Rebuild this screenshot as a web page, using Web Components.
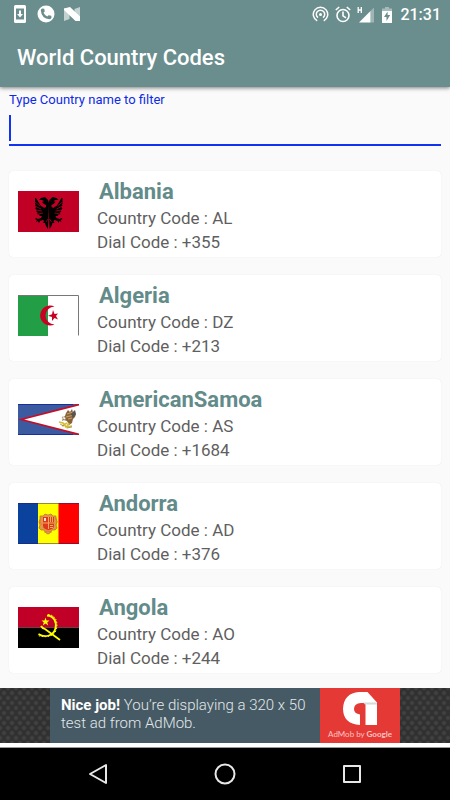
<!DOCTYPE html>
<html lang="en">
<head>
<meta charset="utf-8">
<meta name="viewport" content="width=device-width, initial-scale=1">
<title>World Country Codes</title>
<style>
  html, body {
    height: 100%;
    margin: 0;
  }
  body {
    font-family: Roboto, "Noto Sans", sans-serif;
    background: #fafafa;
  }
</style>
</head>
<body>
<country-app></country-app>

<script>
const countries = [
  { name: 'Albania', code: 'AL', dial: '+355' },
  { name: 'Algeria', code: 'DZ', dial: '+213' },
  { name: 'AmericanSamoa', code: 'AS', dial: '+1684' },
  { name: 'Andorra', code: 'AD', dial: '+376' },
  { name: 'Angola', code: 'AO', dial: '+244' }
];

// Flag drawings, all 61 units wide
const flags = {
  AL: `<svg viewBox="0 0 61 41">
    <path fill="#c00024" d="M0 0h61v41H0z"/>
    <g id="half">
      <path d="M31 12l-1-3-3-3-4 1-2 2 3 0 2 1-2 1 2 2 2 1v2l-2 1-1-1-2-1-2-3-3-5-1 0 0 3 0 3 1 1-1 0 1 3-1 0 2 3-1 0 2 2-1 1 3 1-1 1 3 0-1 2-3 1-2-1-1 1 2 1-1 2 2-1 1 2 1-2 3-1 1 1-1 2 2 0 1 3 2 3z"/>
      <path fill="none" stroke="#c00024" stroke-width=".7" d="M17 11l5 4M17 15l6 3M18 19l6 1M20 23l5-1M28 31l2-3"/>
    </g>
    <use href="#half" transform="translate(61.5 0) scale(-1 1)"/>
  </svg>`,
  DZ: `<svg viewBox="0 0 61 41">
    <path fill="#fff" d="M0 0h61v41H0z"/>
    <path fill="#229e46" d="M0 0h30v41H0z"/>
    <path fill="none" stroke="#777" d="M0 .5h60.500v40"/>
    <path fill="#c90024" d="M36.500 11.500A10 10 0 1 0 36.500 29.500A9 9 0 1 1 36.500 11.500z"/>
    <path fill="#c90024" d="M35 15l1.500 4 3.500-.5-2 2.500 2 3.500-3.500-1.500-2.500 3v-4l-4-1.200 4-1.600z"/>
  </svg>`,
  AS: `<svg viewBox="0 0 61 31">
    <path fill="#3b5a9f" d="M0 0h61v31H0z"/>
    <path fill="#fff" stroke="#c80c25" stroke-width="1.700" d="M63 0L3 15.500 63 31z"/>
    <path fill="none" stroke="#17309b" d="M0 .5h55M0 30.500h55"/>
    <path fill="#8a6239" d="M48 9l2-3 2 2 2-3 1 3 2-1-1 3 2 0-1 3-2 2-1 4-3 2-2-4-3-1-2 1 1-3 2-2z"/>
    <path fill="none" stroke="#d6b078" stroke-width=".8" d="M49 10l6-2M48 13l8-2M50 15l4-1"/>
    <path fill="#555" d="M53 10l4-4 1 4-3 4z"/>
    <path fill="#fff" stroke="#8a6239" stroke-width=".5" d="M44 13l3 0 1 2-2 1z"/>
    <path fill="none" stroke="#d7bd35" stroke-width="1.700" d="M41 18l4 1 3 4 6-1M44 22l5-3M48 24l3-5"/>
    <path fill="none" stroke="#776623" stroke-width=".6" d="M42 20l4 2M49 24l5-1"/>
  </svg>`,
  AD: `<svg viewBox="0 0 61 41">
    <path fill="#0b429d" d="M0 0h20.500v41H0z"/>
    <path fill="#ff0" d="M20 0h21v41H20z"/>
    <path fill="#fe0000" d="M40.500 0H61v41H40.500z"/>
    <path fill="none" stroke="#281a65" stroke-opacity=".5" d="M0 .5h61M0 40.500h61"/>
    <path fill="#df9848" stroke="#bd6f2e" stroke-width=".7" d="M22 13l3 0 2-2 3 1 3-1 2 2 3 0 0 3 1 3-1 3 1 3-2 2-3 0-2 3-2 1-2-1-2-3-3 0-2-2 1-3-1-3 1-3z"/>
    <path fill="#dc391f" d="M25 14h11v9q0 3-5.500 4Q25 26 25 23z"/>
    <path fill="#f4ac58" d="M30 14h1v12h-1zM25 19.500h11v1H25zM32 14h1v5h-1zM34 14h1v5h-1zM32 22h3v1h-3zM32 24h3v1h-3z"/>
    <path fill="#eee1d4" d="M26 15h2v3h-2z"/>
    <path fill="none" stroke="#e87b39" d="M23 15q-2 4 1 7M38 15q2 4 0 7M26 29q4-2 8 0"/>
  </svg>`,
  AO: `<svg viewBox="0 0 61 41">
    <path fill="#c00027" d="M0 0h61v20.500H0z"/>
    <path d="M0 20.500h61V41H0z"/>
    <path fill="none" stroke="#ff0" stroke-width="1.800" d="M29 8.500C36 9 39 15 37.500 21 36 29 27 31 20.500 27"/>
    <path fill="none" stroke="#ff0" stroke-width="1" stroke-dasharray="1.500 1.500" d="M30 7.500C38 8 40 15 38.500 22 36.500 30 27 31 20 28.500"/>
    <path fill="none" stroke="#ff0" stroke-width="1.800" d="M23 19q1 2 4 3l15 11"/>
    <path fill="#ff0" d="M27.500 10.500l1 3h3l-2.300 1.900 1 3-2.700-1.900-2.700 1.900 1-3-2.300-1.900h3z"/>
  </svg>`
};

class StatusBar extends HTMLElement {
  constructor() {
    super();
    this.attachShadow({ mode: 'open' });
    this.shadowRoot.innerHTML = `
      <style>
        :host {
          display: flex;
          justify-content: space-between;
          align-items: center;
          height: 28px;
          padding: 0 9px 0 12px;
          color: #fff;
          font-size: 16px;
          font-weight: 500;
        }
        .group {
          display: flex;
          align-items: center;
        }
        .left { gap: 9px; }
        .right { gap: 6px; }
        svg { display: block; }
      </style>
      <div class="group left">
        <svg width="16" height="18" viewBox="0 0 16 18" aria-hidden="true">
          <path fill="#fff" fill-rule="evenodd" d="M3.500 0h9Q14 0 14 1.500v15q0 1.500-1.500 1.500h-9Q2 18 2 16.500v-15Q2 0 3.500 0zM4 3.500v11h8v-11z"/>
          <path fill="#fff" d="M7 5.500h2V9h2l-3 3.500L5 9h2z"/>
        </svg>
        <svg width="18" height="18" viewBox="0 0 18 18" aria-hidden="true">
          <circle cx="9" cy="9" r="8.500" fill="#fff"/>
          <path fill="#6a8e8d" d="M5.200 3.500l2 .2.600 2.800-1.300 1.200q1.200 2.500 3.800 3.800l1.200-1.300 2.800.6.200 2q-.4 1.400-1.900 1.400Q4.500 13.500 3.800 5.400q0-1.500 1.400-1.900z"/>
        </svg>
        <svg width="17" height="14" viewBox="0 0 17 14" aria-hidden="true">
          <path fill="#fff" fill-opacity=".6" d="M0 1.500h5.500V12L0 14zM10.500 2L16 0v12h-5.500z"/>
          <path fill="#fff" d="M0 1.500L6 0l10 9.500V14h-4.500L0 3z"/>
        </svg>
      </div>
      <div class="group right">
        <svg width="17" height="17" viewBox="0 0 17 17" fill="none" stroke="#fff" stroke-width="1.500" aria-hidden="true">
          <path d="M5.200 14.800a7.200 7.200 0 1 1 6.600 0"/>
          <path d="M6 11.700a4.200 4.200 0 1 1 5 0"/>
          <circle cx="8.500" cy="8.500" r="1.500" fill="#fff" stroke="none"/>
        </svg>
        <svg width="16" height="17" viewBox="0 0 16 17" fill="none" stroke="#fff" stroke-width="1.600" aria-hidden="true">
          <circle cx="8" cy="9.500" r="6"/>
          <path d="M8 5.500v4.300l3 2M.8 4l3.400-3M15.200 4l-3.400-3"/>
        </svg>
        <svg width="17" height="17" viewBox="0 0 17 17" aria-hidden="true">
          <path fill="none" stroke="#fff" stroke-width="1.300" d="M1.200 1v6M4.300 1v6M1 4h3.500"/>
          <path fill="#fff" d="M13.500 5v11.500H2z"/>
          <path fill="#fff" fill-opacity=".35" d="M13.500 5L17 1.500v15h-3.500z"/>
        </svg>
        <svg width="14" height="17" viewBox="1 0 14 17" aria-hidden="true">
          <path fill="#fff" fill-opacity=".4" d="M6 1h4v1.500h3V5H3V2.500h3z"/>
          <path fill="#fff" d="M3 5h10v12H3z"/>
          <path fill="#6a8e8d" d="M8.600 5.500L5 11h2.500v4l3.700-6H8.600z"/>
        </svg>
        <time>21:31</time>
      </div>
    `;
  }
}
customElements.define('status-bar', StatusBar);

class AppHeader extends HTMLElement {
  constructor() {
    super();
    this.attachShadow({ mode: 'open' });
    this.shadowRoot.innerHTML = `
      <style>
        :host {
          display: block;
          flex: none;
          z-index: 1;
          background: #6a8e8d;
          box-shadow: 0 1px 4px rgba(0, 0, 0, 0.5);
        }
        h1 {
          margin: 0;
          padding: 0 17px;
          font-size: 22px;
          font-weight: 500;
          line-height: 59px;
          color: #fff;
        }
      </style>
      <status-bar></status-bar>
      <h1><slot></slot></h1>
    `;
  }
}
customElements.define('app-header', AppHeader);

class FilterField extends HTMLElement {
  constructor() {
    super();
    this.attachShadow({ mode: 'open' });
    this.shadowRoot.innerHTML = `
      <style>
        :host {
          display: block;
          padding: 5px 9px 0;
        }
        label {
          display: block;
          font-size: 13px;
          line-height: 16px;
          color: #0d2be6;
        }
        .box {
          position: relative;
          margin-top: 3px;
        }
        input {
          display: block;
          box-sizing: border-box;
          width: 100%;
          height: 35px;
          padding: 0 4px;
          border: 0;
          border-bottom: 2px solid #1033f0;
          outline: 0;
          background: none;
          font: 20px Roboto, sans-serif;
          color: #333;
          caret-color: transparent;
        }
        /* wide caret at the start of the empty field */
        .box::before {
          content: "";
          position: absolute;
          top: 4px;
          left: 0;
          width: 2px;
          height: 26px;
          background: #1033f0;
        }
      </style>
      <label for="filter"><slot></slot></label>
      <div class="box"><input id="filter" type="text" autocomplete="off"></div>
    `;
    this.shadowRoot.querySelector('input').addEventListener('input', (e) => {
      this.dispatchEvent(new CustomEvent('filter', { detail: e.target.value }));
    });
  }
}
customElements.define('filter-field', FilterField);

class CountryFlag extends HTMLElement {
  constructor() {
    super();
    this.attachShadow({ mode: 'open' });
  }

  connectedCallback() {
    this.shadowRoot.innerHTML = `
      <style>
        :host {
          display: flex;
          align-items: center;
          width: 61px;
          height: 41px;
        }
        svg {
          display: block;
          width: 100%;
        }
      </style>
      ${flags[this.getAttribute('code')]}
    `;
  }
}
customElements.define('country-flag', CountryFlag);

class CountryCard extends HTMLElement {
  constructor() {
    super();
    this.attachShadow({ mode: 'open' });
  }

  connectedCallback() {
    this.shadowRoot.innerHTML = `
      <style>
        :host {
          display: flex;
          gap: 18px;
          padding: 7px 9px 3px;
          border-radius: 4px;
          background: #fff;
          box-shadow: 0 0 1px rgba(0, 0, 0, 0.12);
        }
        ::slotted(country-flag) {
          flex: none;
          margin-top: 13px;
        }
        h2 {
          margin: 0;
          padding-left: 2px;
          font-size: 22px;
          font-weight: 700;
          line-height: 28px;
          color: #628b8a;
        }
        p {
          margin: 0;
          font-size: 17px;
          line-height: 24px;
          color: #5f5f5f;
        }
      </style>
      <slot name="flag"></slot>
      <div>
        <h2><slot></slot></h2>
        <p>Country Code : ${this.getAttribute('code')}</p>
        <p>Dial Code : ${this.getAttribute('dial')}</p>
      </div>
    `;
  }
}
customElements.define('country-card', CountryCard);

class AdBanner extends HTMLElement {
  constructor() {
    super();
    this.attachShadow({ mode: 'open' });
    this.shadowRoot.innerHTML = `
      <style>
        :host {
          display: flex;
          justify-content: center;
          flex: none;
          height: 55px;
          border-bottom: 4px solid #fff;
          background-color: #303030;
          background-image:
            radial-gradient(circle, #424242 1px, transparent 3px),
            radial-gradient(circle, #424242 1px, transparent 3px);
          background-size: 8px 10px;
          background-position: 0 0, 4px 5px;
        }
        a {
          display: flex;
          width: 350px;
          background: #455a64;
          color: #e3e8ea;
          text-decoration: none;
        }
        p {
          flex: 1;
          margin: 0;
          padding: 8px 0 0 11px;
          font-size: 15px;
          font-weight: 300;
          line-height: 18px;
        }
        .brand {
          display: flex;
          flex-direction: column;
          align-items: center;
          gap: 3px;
          width: 80px;
          padding-top: 4px;
          background: #e53935;
          color: #f8c4c2;
          font: 8px/12px Lato, sans-serif;
          white-space: nowrap;
        }
        b {
          font-weight: 700;
        }
        p b { color: #fff; }
        svg { display: block; }
      </style>
      <a href="#">
        <p><b>Nice job!</b> You’re displaying a 320 x 50 test ad from AdMob.</p>
        <span class="brand">
          <svg width="34" height="33" viewBox="0 0 34 33" aria-hidden="true">
            <path fill="#fff" d="M16 0h8.500L34 10.500V33H22.500V11H18q-7 .5-7 6 0 4.500 6 5.500V33Q0 32 0 16.500 1 1 16 0z"/>
            <path fill="#d8d8d8" d="M20 10.500h13l1 1v1H22z"/>
          </svg>
          <span>AdMob by <b>Google</b></span>
        </span>
      </a>
    `;
  }
}
customElements.define('ad-banner', AdBanner);

class NavBar extends HTMLElement {
  constructor() {
    super();
    this.attachShadow({ mode: 'open' });
    this.shadowRoot.innerHTML = `
      <style>
        :host {
          display: flex;
          justify-content: center;
          gap: 79px;
          flex: none;
          height: 53px;
          border-top: 1px solid #999;
          box-sizing: border-box;
          background: #000;
        }
        button {
          display: flex;
          align-items: center;
          justify-content: center;
          width: 48px;
          padding: 0;
          border: 0;
          background: none;
        }
        svg {
          fill: none;
          stroke: #e8e8e8;
          stroke-width: 2;
          stroke-linejoin: round;
        }
      </style>
      <button aria-label="Back"><svg width="22" height="22" viewBox="0 0 22 22"><path d="M19 2v18L3 11z"/></svg></button>
      <button aria-label="Home"><svg width="22" height="22" viewBox="0 0 22 22"><circle cx="11" cy="11" r="9.500"/></svg></button>
      <button aria-label="Recent apps"><svg width="22" height="22" viewBox="0 0 22 22"><rect x="3" y="3" width="16" height="16"/></svg></button>
    `;
  }
}
customElements.define('nav-bar', NavBar);

class CountryApp extends HTMLElement {
  constructor() {
    super();
    this.attachShadow({ mode: 'open' });
    this.shadowRoot.innerHTML = `
      <style>
        :host {
          display: flex;
          flex-direction: column;
          height: 100%;
        }
        main {
          display: flex;
          flex-direction: column;
          flex: 1;
          min-height: 0;
        }
        .list {
          display: flex;
          flex-direction: column;
          gap: 18px;
          flex: 1;
          min-height: 0;
          margin-top: 24px;
          padding: 1px 9px 0;
          overflow-y: auto;
          scrollbar-width: none;
        }
        country-card { flex: none; }
      </style>
      <app-header>World Country Codes</app-header>
      <main>
        <filter-field>Type Country name to filter</filter-field>
        <div class="list"></div>
      </main>
      <ad-banner></ad-banner>
      <nav-bar></nav-bar>
    `;
  }

  connectedCallback() {
    this.renderList('');
    this.shadowRoot.querySelector('filter-field').addEventListener('filter', (e) => {
      this.renderList(e.detail);
    });
  }

  renderList(text) {
    const query = text.trim().toLowerCase();
    this.shadowRoot.querySelector('.list').innerHTML = countries
      .filter((c) => c.name.toLowerCase().includes(query))
      .map((c) => `
        <country-card code="${c.code}" dial="${c.dial}">
          <country-flag slot="flag" code="${c.code}"></country-flag>${c.name}</country-card>
      `).join('');
  }
}
customElements.define('country-app', CountryApp);
</script>
</body>
</html>
